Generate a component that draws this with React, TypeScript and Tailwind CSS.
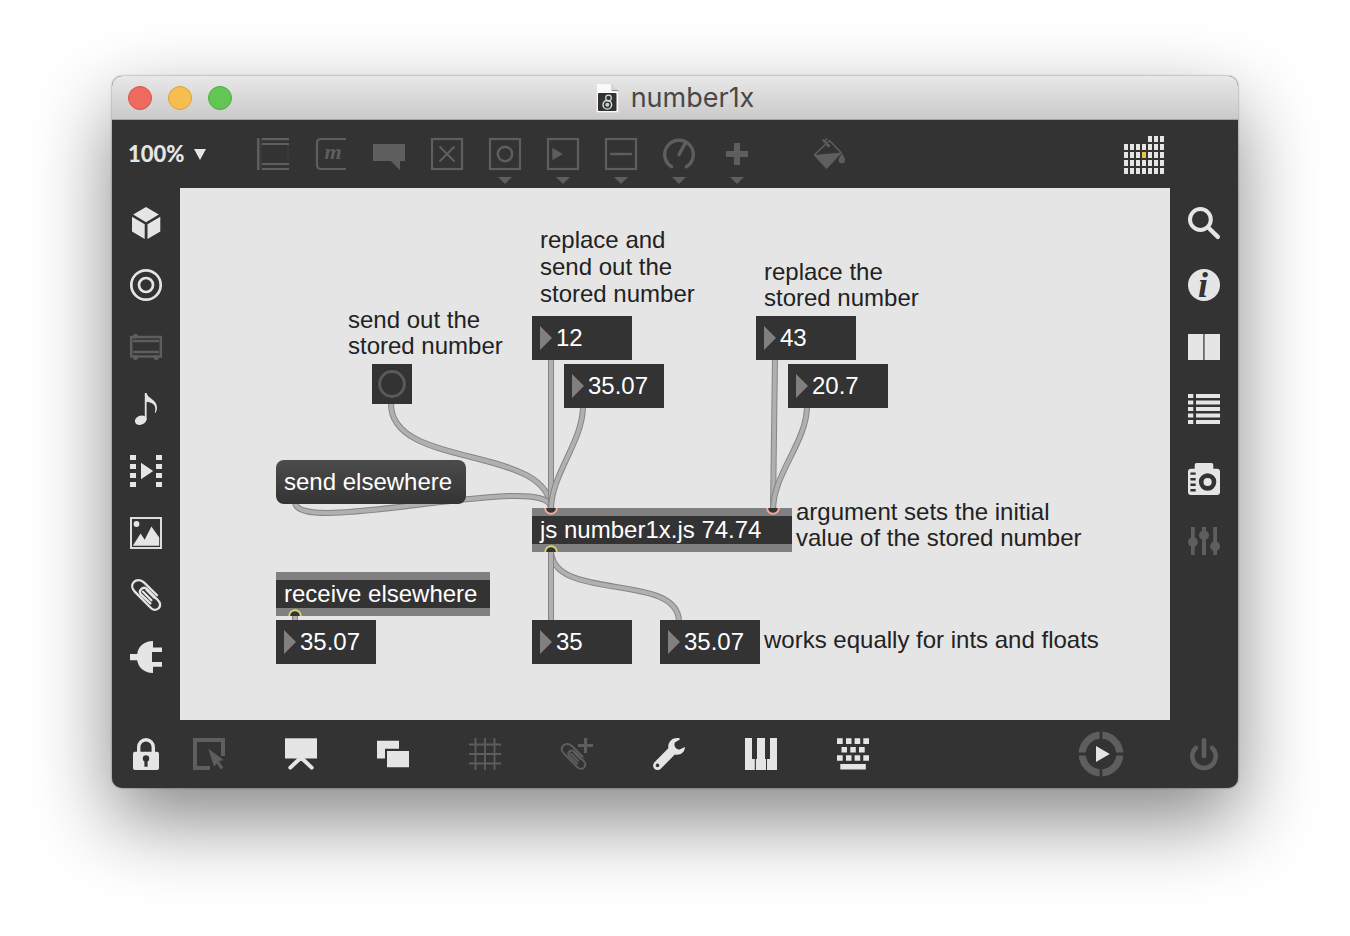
import type { ReactNode } from 'react';

type IconProps = { children: ReactNode; w?: number; h?: number };

function Icon({ children, w = 32, h = 32 }: IconProps) {
  return (
    <svg width={w} height={h} viewBox={`0 0 ${w} ${h}`} fill="currentColor" aria-hidden="true" className="block overflow-visible">
      {children}
    </svg>
  );
}

type ToolProps = { label: string; dim?: boolean; className?: string; children: ReactNode };

function Tool({ label, dim = false, className = '', children }: ToolProps) {
  return (
    <button
      type="button"
      aria-label={label}
      className={`shrink-0 ${dim ? 'text-[#5e5e5e]' : 'text-[#e5e5e5]'} ${className}`}
    >
      {children}
    </button>
  );
}

const MenuArrow = () => <path d="M9 39H23L16 46Z" />;
const Frame = () => <rect x="1" y="1" width="30" height="30" fill="none" stroke="currentColor" strokeWidth="2.200" />;

const clipPath =
  'M27 16.2L14.2 3.6C10.6.2 6.2.6 3.9 3C1.5 5.6 1.6 9.4 4.5 12.4L20.6 28.8C23.2 31.4 26.6 31.3 28.6 29.3C30.7 27 30.4 23.8 28 21.2L17.2 10.4C15.4 8.6 13 8.5 11.3 10.1C9.6 11.8 9.6 14 11.2 15.6L20.4 24.4M24.4 18.8L16.4 10.8M13 12.8L21.4 21.2';

function TitleBar() {
  return (
    <header className="grid h-11 grid-cols-[1fr_auto_1fr] items-center border-b border-[#a3a3a3] bg-linear-to-b from-[#e8e8e8] to-[#cacaca] px-4">
      <div className="flex gap-4">
        <button type="button" aria-label="Close" className="size-6 rounded-full border border-[#d9534b] bg-[#ee6a5f]" />
        <button type="button" aria-label="Minimize" className="size-6 rounded-full border border-[#dba140] bg-[#f5bf4f]" />
        <button type="button" aria-label="Zoom window" className="size-6 rounded-full border border-[#4ead3f] bg-[#62c655]" />
      </div>
      <div className="flex items-center gap-3">
        <svg width="23" height="30" viewBox="0 0 23 30" aria-hidden="true">
          <path d="M0.5 0.5H15L22.5 8V29.5H0.5Z" fill="#fafafa" stroke="#d8d8d8" strokeWidth=".6" />
          <path d="M15 .5V8H22.5Z" fill="#d5d5d5" />
          <path d="M16 7.6H22.4" stroke="#8c8c8c" />
          <rect x="2" y="10" width="18.500" height="18" rx="1" fill="#333" />
          <circle cx="12.500" cy="15" r="2.800" fill="none" stroke="#e0e0e0" strokeWidth="1.200" />
          <circle cx="11.300" cy="21.800" r="4.300" fill="none" stroke="#e0e0e0" strokeWidth="1.400" />
          <circle cx="11.300" cy="21.800" r="2" fill="#a5e0e0" />
        </svg>
        <h1 className="pt-px font-['Inter',sans-serif] text-[27px] leading-8 text-[#484848]">number1x</h1>
      </div>
    </header>
  );
}

function TopToolbar() {
  const cells = [];
  for (let row = 0; row < 5; row++) {
    for (let col = row === 0 ? 4 : 0; col < 7; col++) {
      cells.push(
        <rect key={`${row}-${col}`} x={col * 6} y={row * 8} width="4" height="6" fill={row === 2 && col === 3 ? '#e3c63f' : '#e5e5e5'} />,
      );
    }
  }
  return (
    <div role="toolbar" aria-label="Objects" className="flex h-[68px] items-start pt-4 pl-4">
      <div className="mt-[2px] mr-12 flex h-8 w-[81px] shrink-0 items-center text-[#e5e5e5]">
        <select
          aria-label="Zoom level"
          defaultValue="100%"
          className="h-8 w-20 appearance-none bg-transparent font-['Lato',sans-serif] text-[22px] leading-8 font-black"
        >
          <option>100%</option>
          <option>200%</option>
        </select>
        <svg width="12" height="11" viewBox="0 0 12 11" fill="currentColor" aria-hidden="true" className="pointer-events-none -ml-[14px] shrink-0">
          <path d="M0 0H12L6 11Z" />
        </svg>
      </div>
      <div className="mt-[2px] flex items-start gap-[26px]">
        <Tool label="Object" dim>
          <Icon>
            <path d="M0 0H2.500V32H0ZM4.700 0H32V2.200H4.700ZM4.700 5H32V7H4.700ZM4.700 25H32V27H4.700ZM4.700 30H32V32H4.700Z" />
            <path d="M4 2V30M31 7V25" stroke="currentColor" strokeWidth=".7" opacity=".45" />
          </Icon>
        </Tool>
        <Tool label="Message" dim>
          <Icon>
            <path d="M31 1H6Q2 1 2 5V27Q2 31 6 31H31" fill="none" stroke="currentColor" strokeWidth="2.200" />
            <text x="18" y="21" textAnchor="middle" className="font-['Liberation_Serif',serif] text-[22px] font-bold italic">m</text>
          </Icon>
        </Tool>
        <Tool label="Comment" dim>
          <Icon>
            <path d="M0 6H32V23H27V32L17.700 23H0Z" />
          </Icon>
        </Tool>
        <Tool label="Toggle" dim>
          <Icon>
            <Frame />
            <path d="M8.500 8.500L23.500 23.500M23.500 8.500L8.500 23.500" stroke="currentColor" strokeWidth="2.200" />
          </Icon>
        </Tool>
        <Tool label="Button" dim>
          <Icon h={48}>
            <Frame />
            <circle cx="16" cy="16" r="7.200" fill="none" stroke="currentColor" strokeWidth="2.400" />
            <MenuArrow />
          </Icon>
        </Tool>
        <Tool label="Number" dim>
          <Icon h={48}>
            <Frame />
            <path d="M5.300 9.700L15.700 16L5.300 22.300Z" />
            <MenuArrow />
          </Icon>
        </Tool>
        <Tool label="Slider" dim>
          <Icon h={48}>
            <Frame />
            <path d="M6 16H26" stroke="currentColor" strokeWidth="2.400" strokeLinecap="round" />
            <MenuArrow />
          </Icon>
        </Tool>
        <Tool label="Dial" dim>
          <Icon h={48}>
            <path d="M8.700 28.800A14.300 14.300 0 1 1 23.300 28.800" fill="none" stroke="currentColor" strokeWidth="3.400" strokeLinecap="round" />
            <path d="M16 16.600L21.800 6" stroke="currentColor" strokeWidth="3.400" strokeLinecap="round" />
            <MenuArrow />
          </Icon>
        </Tool>
        <Tool label="Add" dim>
          <Icon h={48}>
            <path d="M13 5H19V13H27V19H19V27H13V19H5V13H13Z" />
            <MenuArrow />
          </Icon>
        </Tool>
        <Tool label="Format" dim className="ml-[34px]">
          <Icon>
            <path d="M1.600 16.800L16.500 2.500L28 14.600L13.500 30Z" fill="none" stroke="currentColor" strokeWidth="1.500" />
            <path d="M.5 17L28.800 14.600L13.500 30.800Z" />
            <path d="M9.500 1.600L16.200 8.300M13.800 .6L10.800 4.600" stroke="currentColor" strokeWidth="1.700" />
            <circle cx="15.400" cy="7.600" r="1.700" />
            <path d="M29 14.500C30 18 32 19.500 32 22A3.200 3.200 0 0 1 25.600 22C25.600 19.500 28 18 29 14.500Z" />
          </Icon>
        </Tool>
      </div>
      <button type="button" aria-label="Calendar" className="mr-[74px] ml-auto">
        <Icon w={40} h={38}>{cells}</Icon>
      </button>
    </div>
  );
}

function LeftRail() {
  return (
    <nav aria-label="Browser" className="flex w-[68px] shrink-0 flex-col items-center gap-[30px] pt-[19px]">
      <Tool label="Packages">
        <Icon>
          <path d="M16 0L28.800 7.500L16 15.200L3.200 7.500ZM2 9.700L14.700 17.300V32L2 24.600ZM30.300 9.700V24.600L17.500 32V17.300Z" />
        </Icon>
      </Tool>
      <Tool label="Beap">
        <Icon>
          <circle cx="16" cy="16" r="14.700" fill="none" stroke="currentColor" strokeWidth="2.700" />
          <circle cx="16" cy="16" r="7" fill="none" stroke="currentColor" strokeWidth="2.700" />
        </Icon>
      </Tool>
      <Tool label="Rack" dim>
        <Icon>
          <rect x="1.200" y="6" width="29.600" height="19.500" fill="none" stroke="currentColor" strokeWidth="2.500" />
          <path d="M3 10H29M3 21H29" stroke="currentColor" strokeWidth="2.300" />
          <circle cx="5.500" cy="5.300" r="2.500" />
          <circle cx="5.500" cy="26.500" r="2.500" />
          <circle cx="26.300" cy="26.500" r="2.500" />
        </Icon>
      </Tool>
      <Tool label="Audio">
        <Icon>
          <ellipse cx="10.700" cy="27.200" rx="6" ry="4.500" transform="rotate(-22 10.700 27.200)" />
          <path d="M14.800 0H16.600C17.200 5.500 27 6 27 14.500C27 17 26.200 18.800 25.400 20L24.800 19.500C26.500 14 24.500 9.500 16.600 8.800V27H14.800Z" />
        </Icon>
      </Tool>
      <Tool label="Video">
        <Icon>
          <path d="M0 0H6V5H0ZM0 9H6V14H0ZM0 18H6V23H0ZM0 27H6V32H0ZM26 0H32V5H26ZM26 9H32V14H26ZM26 18H32V23H26ZM26 27H32V32H26ZM11 7.700L23.200 16L11 24.200Z" />
        </Icon>
      </Tool>
      <Tool label="Images">
        <Icon>
          <rect x="1" y="1" width="30" height="30" fill="none" stroke="currentColor" strokeWidth="1.900" />
          <circle cx="6.500" cy="7" r="2.900" />
          <path d="M2.800 28.700L10.600 16.500L14.700 22.800L21.400 9.500L29.200 20.500V28.700Z" />
        </Icon>
      </Tool>
      <Tool label="Snippets">
        <Icon>
          <path d={clipPath} fill="none" stroke="currentColor" strokeWidth="2.300" strokeLinecap="round" strokeLinejoin="round" />
        </Icon>
      </Tool>
      <Tool label="Plug-ins">
        <Icon>
          <path d="M23 0V6.500H32V11H22V21H32V25.700H23V32C14 32 8.200 26.500 7.200 19.300H0V13H7.200C8.200 5.500 14 0 23 0Z" />
        </Icon>
      </Tool>
    </nav>
  );
}

function RightRail() {
  return (
    <nav aria-label="Sidebar" className="flex w-[68px] shrink-0 flex-col items-center gap-[30px] pt-[19px]">
      <Tool label="Search">
        <Icon>
          <circle cx="12.400" cy="12.500" r="10.400" fill="none" stroke="currentColor" strokeWidth="4" />
          <path d="M21 21.300L29.800 29.900" stroke="currentColor" strokeWidth="4.400" strokeLinecap="round" />
        </Icon>
      </Tool>
      <Tool label="Inspector">
        <Icon>
          <circle cx="16" cy="16" r="16" />
          <text x="15" y="28" textAnchor="middle" fill="#333333" className="font-['Liberation_Serif',serif] text-4xl font-bold italic">i</text>
        </Icon>
      </Tool>
      <Tool label="Reference">
        <Icon>
          <path d="M0 3H32V29H0Z" />
          <path d="M15.900 3V29" stroke="#6b6b6b" strokeWidth="1.800" />
        </Icon>
      </Tool>
      <Tool label="Console">
        <Icon>
          <path d="M0 1H5.300V5H0ZM8 1H32V5H8ZM0 7.500H5.300V11.500H0ZM8 7.500H32V11.500H8ZM0 14H5.300V18H0ZM8 14H32V18H8ZM0 20.500H5.300V24.500H0ZM8 20.500H32V24.500H8ZM0 27H5.300V31H0ZM8 27H32V31H8Z" />
        </Icon>
      </Tool>
      <Tool label="Snapshots" className="mt-2">
        <Icon>
          <path d="M8.500 0H23.500Q25.300 0 25.300 2V5.700H29Q32 5.700 32 8.700V29Q32 32 29 32H3Q0 32 0 29V8.700Q0 5.700 3 5.700H6.700V2Q6.700 0 8.500 0Z" />
          <circle cx="19.600" cy="19" r="6.400" fill="none" stroke="#333333" strokeWidth="4.600" />
          <path d="M2.400 10.600H7.700M2.400 16.200H7.700M2.400 21.700H7.700M2.400 27.200H7.700" stroke="#333333" strokeWidth="2.400" />
        </Icon>
      </Tool>
      <Tool label="Parameters" dim>
        <Icon>
          <path d="M3 2H6.700V30H3ZM14 2H18V30H14ZM25.200 2H29V30H25.200Z" />
          <circle cx="4.900" cy="17" r="4.900" />
          <circle cx="16" cy="10.300" r="4.900" />
          <circle cx="27.100" cy="21.200" r="4.900" />
        </Icon>
      </Tool>
    </nav>
  );
}

function BottomToolbar() {
  return (
    <div role="toolbar" aria-label="Patcher" className="flex h-[68px] items-center pr-[18px] pl-[18px]">
      <Tool label="Lock" className="mr-[31px]">
        <Icon>
          <path d="M8.700 15V9.300A7.300 7.600 0 0 1 23.300 9.300V15" fill="none" stroke="currentColor" strokeWidth="3.400" />
          <rect x="3" y="13.700" width="26" height="18.300" rx="2" />
          <circle cx="16" cy="20.500" r="3.200" fill="#333333" />
          <path d="M14.400 21H17.600V28.800H14.400Z" fill="#333333" />
        </Icon>
      </Tool>
      <div className="flex gap-[60px]">
        <Tool label="Operate while unlocked" dim>
          <Icon>
            <path d="M0 0H32V18H28V4H4V28H17V32H0Z" />
            <path d="M15.300 10.700L30.700 22L26 23.300L30.200 29.800L27.800 31.400L24 25.600L21 28.500Z" />
          </Icon>
        </Tool>
        <Tool label="Presentation">
          <Icon>
            <path d="M0 .3H32V20.500H0Z" />
            <path d="M16 19.500L5.300 29.600M16 19.500L26.700 29.600" stroke="currentColor" strokeWidth="4" strokeLinecap="round" />
          </Icon>
        </Tool>
        <Tool label="Windows">
          <Icon>
            <path d="M0 2.700H22V10.800H8V20.500H0ZM10 13H32V29.300H10Z" />
          </Icon>
        </Tool>
        <Tool label="Grid" dim>
          <Icon>
            <path d="M6.500 0V32M16 0V32M25.500 0V32M0 6.500H32M0 16H32M0 25.500H32" stroke="currentColor" strokeWidth="1.800" />
          </Icon>
        </Tool>
        <Tool label="Add snippet" dim>
          <Icon>
            <g transform="translate(-1 5) scale(.84)">
              <path d={clipPath} fill="none" stroke="currentColor" strokeWidth="2.300" strokeLinecap="round" strokeLinejoin="round" />
            </g>
            <path d="M24.500 0V15M17 7.500H32" stroke="currentColor" strokeWidth="3.200" />
          </Icon>
        </Tool>
        <Tool label="Debug">
          <Icon>
            <path
              fillRule="evenodd"
              d="M26.800.5C21-1.200 14.600 2.800 15.300 10.200L1.500 24.200A4.500 4.500 0 0 0 7.800 30.800L21.800 16.600C28 17.600 31.800 14 32 9L26.500 11.600C23 11.500 20.500 8.500 21.800 4.500L26.800 1.500ZM4.500 25.600A1.800 1.800 0 1 1 4.490 25.600Z"
            />
          </Icon>
        </Tool>
        <Tool label="Keys">
          <Icon>
            <path d="M0 0H7V21H9.800V32H0ZM12 0H20V21H21V32H10.900V21H12ZM25 0H32V32H22V21H25Z" />
          </Icon>
        </Tool>
        <Tool label="Keyboard">
          <Icon>
            <path d="M0 .3H5.700V6H0ZM9 .3H14.500V6H9ZM17.600 .3H23.200V6H17.600ZM26.300 .3H32V6H26.300ZM4.500 9H10V14.500H4.500ZM13.300 9H18.800V14.500H13.300ZM22 9H27.700V14.500H22ZM0 17.200H5.700V22.700H0ZM9 17.200H14.500V22.700H9ZM17.600 17.200H23.200V22.700H17.600ZM26.300 17.200H32V22.700H26.300ZM3.300 26H28.800V31.500H3.300Z" />
          </Icon>
        </Tool>
      </div>
      <Tool label="Run" dim className="mr-16 ml-auto">
        <Icon w={46} h={46}>
          <circle cx="23" cy="23" r="18.800" fill="none" stroke="currentColor" strokeWidth="7.200" />
          <path d="M23 0V46M0 23H46" stroke="#333333" strokeWidth="2.800" />
          <path d="M18 15L31.800 23L18 31Z" fill="#e5e5e5" />
        </Icon>
      </Tool>
      <Tool label="Audio on" dim>
        <Icon>
          <path d="M7.700 10A11.700 11.700 0 1 0 24.300 10" fill="none" stroke="currentColor" strokeWidth="4.600" strokeLinecap="round" />
          <path d="M16 2.300V18" stroke="currentColor" strokeWidth="4.600" strokeLinecap="round" />
        </Icon>
      </Tool>
    </div>
  );
}

const cords = [
  'M211 216C211 282 371 256 371 322',
  'M115 314C115 350 371 282 371 320',
  'M371 170V322',
  'M403 218C403 254 371 286 371 322',
  'M595 170L593 322',
  'M627 218C627 254 593 286 593 322',
  'M371 362C371 415 499 383 499 434',
  'M371 362V434',
  'M115 426V434',
];

function Cords() {
  return (
    <svg width="990" height="532" viewBox="0 0 990 532" fill="none" aria-hidden="true" className="absolute top-0 left-0">
      {cords.map((d) => (
        <g key={d}>
          <path d={d} stroke="#858585" strokeWidth="6" />
          <path d={d} stroke="#b0b0b0" strokeWidth="4" />
        </g>
      ))}
    </svg>
  );
}

function NumberBox({ label, value, place }: { label: string; value: string; place: string }) {
  return (
    <label className={`absolute flex h-11 w-[100px] items-center gap-1 bg-[#333333] pl-2 ${place}`}>
      <svg width="12" height="24" viewBox="0 0 12 24" aria-hidden="true" className="shrink-0">
        <path d="M0 0L12 12L0 24Z" fill="#808080" />
      </svg>
      <input
        type="text"
        inputMode="decimal"
        aria-label={label}
        defaultValue={value}
        className="h-11 w-full min-w-0 bg-transparent text-2xl leading-7 text-white"
      />
    </label>
  );
}

function Comment({ place, children }: { place: string; children: ReactNode }) {
  return <p className={`absolute whitespace-nowrap text-[#222222] ${place}`}>{children}</p>;
}

function Inlet({ place }: { place: string }) {
  return (
    <svg width="14" height="7" viewBox="0 0 14 7" aria-hidden="true" className={`absolute ${place}`}>
      <circle cx="7" cy="0" r="5.800" fill="#333333" stroke="#f4ab9c" strokeWidth="1.900" />
    </svg>
  );
}

function Outlet({ place }: { place: string }) {
  return (
    <svg width="14" height="7" viewBox="0 0 14 7" aria-hidden="true" className={`absolute ${place}`}>
      <circle cx="7" cy="7" r="5.800" fill="#333333" stroke="#d6d96c" strokeWidth="1.900" />
    </svg>
  );
}

function ObjectBox({ place, children, ports }: { place: string; children: ReactNode; ports: ReactNode }) {
  return (
    <div className={`absolute h-11 border-y-8 border-[#808080] bg-[#333333] pl-2 text-2xl leading-7 text-white ${place}`}>
      {children}
      {ports}
    </div>
  );
}

function Patch() {
  return (
    <main className="relative min-h-[532px] min-w-0 flex-1 overflow-hidden bg-[#e5e5e5] font-['Liberation_Sans',Arial,sans-serif]">
      <Cords />

      <Comment place="left-[168px] top-[119px] text-2xl leading-[26px]">send out the<br />stored number</Comment>
      <Comment place="left-[360px] top-[38px] text-2xl leading-[27px]">replace and<br />send out the<br />stored number</Comment>
      <Comment place="left-[584px] top-[71px] text-2xl leading-[26px]">replace the<br />stored number</Comment>
      <Comment place="left-[616px] top-[311px] text-2xl leading-[26px]">argument sets the initial<br />value of the stored number</Comment>
      <Comment place="left-[584px] top-[439px] text-2xl leading-[26px]">works equally for ints and floats</Comment>

      <button type="button" aria-label="Send out the stored number" className="absolute top-44 left-48 size-10 bg-[#333333]">
        <svg width="40" height="40" viewBox="0 0 40 40" fill="none" aria-hidden="true">
          <circle cx="20" cy="20" r="12.400" stroke="#5a5a5a" strokeWidth="3" />
        </svg>
      </button>
      <button
        type="button"
        className="absolute top-[272px] left-24 h-11 w-[190px] rounded-lg bg-linear-to-b from-[#4c4c4c] to-[#333333] pl-2 text-left text-2xl leading-7 text-white"
      >
        send elsewhere
      </button>

      <NumberBox label="Integer to store and send" value="12" place="left-[352px] top-32" />
      <NumberBox label="Float to store and send" value="35.07" place="left-96 top-44" />
      <NumberBox label="Integer to store" value="43" place="left-[576px] top-32" />
      <NumberBox label="Float to store" value="20.7" place="left-[608px] top-44" />
      <NumberBox label="Received value" value="35.07" place="left-24 top-[432px]" />
      <NumberBox label="Integer output" value="35" place="left-[352px] top-[432px]" />
      <NumberBox label="Float output" value="35.07" place="left-[480px] top-[432px]" />

      <ObjectBox
        place="left-[352px] top-80 w-[260px]"
        ports={
          <>
            <Inlet place="-top-2 left-3" />
            <Inlet place="-top-2 left-[234px]" />
            <Outlet place="-bottom-2 left-3" />
          </>
        }
      >
        js number1x.js 74.74
      </ObjectBox>
      <ObjectBox place="left-24 top-96 w-[214px]" ports={<Outlet place="-bottom-2 left-3" />}>
        receive elsewhere
      </ObjectBox>
    </main>
  );
}

export default function App() {
  return (
    <div className="min-h-screen bg-white px-28 pt-[76px] pb-[148px]">
      <div className="overflow-hidden rounded-[10px] bg-[#333333] shadow-[0_0_2px_rgba(0,0,0,0.5),0_32px_80px_rgba(0,0,0,0.48)]">
        <TitleBar />
        <TopToolbar />
        <div className="flex">
          <LeftRail />
          <Patch />
          <RightRail />
        </div>
        <BottomToolbar />
      </div>
    </div>
  );
}
